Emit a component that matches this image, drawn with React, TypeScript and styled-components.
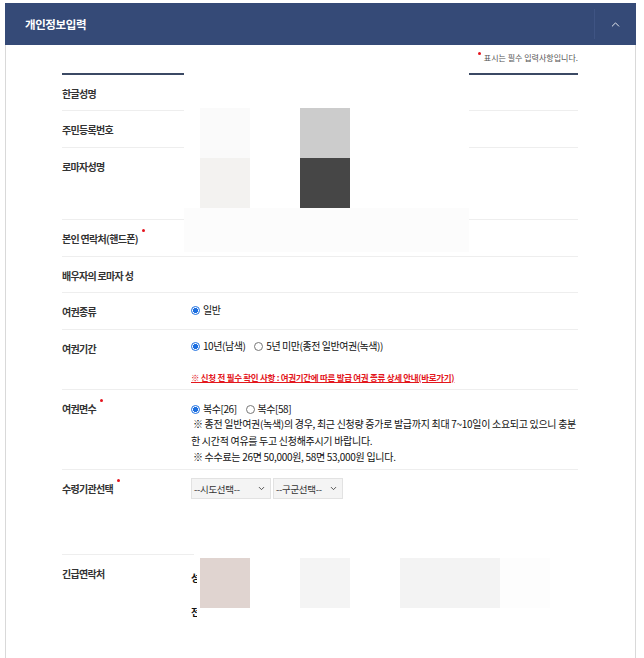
import React from 'react';
import styled, { createGlobalStyle, css } from 'styled-components';
import { ChevronDown, ChevronUp } from 'lucide-react';

const GlobalStyle = createGlobalStyle`
  html, body {
    margin: 0;
    padding: 0;
    background: #ffffff;
  }
  body {
    font-family: "Noto Sans CJK KR", "Noto Sans", sans-serif;
    color: #222;
  }
`;

const Page = styled.div`
  position: relative;
  width: 644px;
  height: 658px;
  padding: 3px 8px 0 5px;
  box-sizing: border-box;
  overflow: hidden;
`;

const Panel = styled.section`
  display: flex;
  flex-direction: column;
  width: 631px;
`;

const PanelHeader = styled.div`
  height: 42px;
  display: flex;
  align-items: center;
  justify-content: space-between;
  background: #354a77;
  padding-left: 20px;
  box-sizing: border-box;
`;

const PanelTitle = styled.h2`
  margin: 0;
  font-size: 11.5px;
  font-weight: 700;
  color: #ffffff;
  letter-spacing: -0.4px;
`;

const HeaderToggle = styled.button`
  width: 42px;
  height: 30px;
  display: flex;
  align-items: center;
  justify-content: center;
  background: none;
  border: none;
  border-left: 1px solid #3f5483;
  margin: 0;
  padding: 0;
  color: #ffffff;
  box-sizing: border-box;

  svg {
    width: 13px;
    height: 13px;
  }
`;

const PanelBody = styled.div`
  border-left: 1px solid #d9d9d9;
  border-right: 1px solid #d9d9d9;
  padding: 7px 57px 0 56px;
  height: 620px;
  box-sizing: border-box;
`;

const RequiredNote = styled.p`
  margin: 0 0 9px;
  text-align: right;
  font-size: 8px;
  line-height: 12px;
  color: #555;
  letter-spacing: 0;
`;

const Dot = styled.span<{ $up?: number }>`
  display: inline-block;
  width: 3px;
  height: 3px;
  border-radius: 50%;
  background: #e5141e;
  vertical-align: top;
  position: relative;
  top: ${(p) => -(p.$up ?? 0)}px;
  margin: 0 3px 0 4px;
`;

const FormTable = styled.div`
  border-top: 2px solid #3b4964;
  display: flex;
  flex-direction: column;
`;

const Row = styled.div<{ $h: number; $last?: boolean }>`
  display: grid;
  grid-template-columns: 129px 1fr;
  height: ${(p) => p.$h}px;
  box-sizing: border-box;
  ${(p) =>
    !p.$last &&
    css`
      border-bottom: 1px solid #eeeeee;
    `}
`;

const Label = styled.div`
  padding-top: 12px;
  font-size: 10px;
  line-height: 13px;
  font-weight: 700;
  color: #333;
  letter-spacing: -0.7px;
  white-space: nowrap;
`;

const Value = styled.div<{ $top: number }>`
  padding-top: ${(p) => p.$top}px;
  font-size: 10px;
  line-height: 14px;
  color: #111;
  letter-spacing: -0.45px;
`;

const RadioGroup = styled.div`
  display: flex;
  align-items: center;
  gap: 9px;
  height: 14px;
`;

const RadioOption = styled.label`
  display: flex;
  align-items: center;
  gap: 3px;
  white-space: nowrap;
`;

const RadioMark = styled.span<{ $checked?: boolean }>`
  display: inline-block;
  width: 9px;
  height: 9px;
  border-radius: 50%;
  box-sizing: border-box;
  ${(p) =>
    p.$checked
      ? css`
          border: 1px solid #1d6fe0;
          background: radial-gradient(circle, #1d6fe0 0 2.6px, #ffffff 2.8px);
        `
      : css`
          border: 1px solid #777;
          background: #fff;
        `}
`;

const GuideLink = styled.a`
  display: block;
  margin-top: 18px;
  font-size: 8.5px;
  line-height: 12px;
  font-weight: 700;
  color: #e3161c;
  text-decoration: underline;
  letter-spacing: -0.3px;
  white-space: nowrap;
`;

const Notice = styled.p`
  margin: 0;
  font-size: 10px;
  line-height: 16.5px;
  letter-spacing: -0.3px;
  color: #111;
  white-space: pre-wrap;
`;

const SelectRow = styled.div`
  display: flex;
  gap: 2px;
`;

const SelectBox = styled.div<{ $w: number }>`
  width: ${(p) => p.$w}px;
  height: 21px;
  box-sizing: border-box;
  display: flex;
  align-items: center;
  justify-content: space-between;
  padding: 0 4px 0 2px;
  background: #f4f4f4;
  border: 1px solid #e2e2e2;
  font-size: 9.5px;
  letter-spacing: -0.3px;
  color: #333;

  svg {
    width: 9px;
    height: 9px;
    color: #333;
  }
`;

const ContactLine = styled.div<{ $gap?: number }>`
  margin-top: ${(p) => p.$gap ?? 0}px;
  font-size: 10px;
  line-height: 14px;
  font-weight: 700;
`;

const MaskLayer = styled.div`
  position: absolute;
  inset: 0;
  pointer-events: none;
`;

const Mask = styled.div<{ $x: number; $y: number; $w: number; $h: number; $c: string }>`
  position: absolute;
  left: ${(p) => p.$x}px;
  top: ${(p) => p.$y}px;
  width: ${(p) => p.$w}px;
  height: ${(p) => p.$h}px;
  background: ${(p) => p.$c};
`;

const masks = [
  { x: 184, y: 60, w: 285, h: 148, c: '#ffffff' },
  { x: 184, y: 208, w: 285, h: 44, c: '#fcfcfc' },
  { x: 200, y: 108, w: 50, h: 50, c: '#fafafa' },
  { x: 300, y: 108, w: 50, h: 50, c: '#cccccc' },
  { x: 200, y: 158, w: 50, h: 50, c: '#f3f2f0' },
  { x: 300, y: 158, w: 50, h: 50, c: '#464646' },
  { x: 197, y: 503, w: 420, h: 155, c: '#ffffff' },
  { x: 194, y: 548, w: 6, h: 8, c: '#ffffff' },
  { x: 200, y: 558, w: 50, h: 50, c: '#e0d4d0' },
  { x: 300, y: 558, w: 50, h: 50, c: '#f4f4f4' },
  { x: 400, y: 558, w: 100, h: 50, c: '#f3f3f3' },
  { x: 500, y: 558, w: 50, h: 50, c: '#fdfdfd' },
];

export default function App() {
  return (
    <>
      <GlobalStyle />
      <Page>
        <Panel>
          <PanelHeader>
            <PanelTitle>개인정보입력</PanelTitle>
            <HeaderToggle aria-label="접기">
              <ChevronUp strokeWidth={1.6} />
            </HeaderToggle>
          </PanelHeader>

          <PanelBody>
            <RequiredNote>
              <Dot $up={0} />
              표시는 필수 입력사항입니다.
            </RequiredNote>

            <FormTable>
              <Row $h={36}>
                <Label>한글성명</Label>
                <Value $top={12} />
              </Row>
              <Row $h={37}>
                <Label>주민등록번호</Label>
                <Value $top={12} />
              </Row>
              <Row $h={72}>
                <Label>로마자성명</Label>
                <Value $top={12} />
              </Row>
              <Row $h={37}>
                <Label>
                  본인 연락처(핸드폰)
                  <Dot $up={3} />
                </Label>
                <Value $top={12} />
              </Row>
              <Row $h={36}>
                <Label>배우자의 로마자 성</Label>
                <Value $top={12} />
              </Row>
              <Row $h={37}>
                <Label>여권종류</Label>
                <Value $top={10}>
                  <RadioGroup>
                    <RadioOption>
                      <RadioMark $checked />
                      일반
                    </RadioOption>
                  </RadioGroup>
                </Value>
              </Row>
              <Row $h={60}>
                <Label>여권기간</Label>
                <Value $top={9}>
                  <RadioGroup>
                    <RadioOption>
                      <RadioMark $checked />
                      10년(남색)
                    </RadioOption>
                    <RadioOption>
                      <RadioMark />
                      5년 미만(종전 일반여권(녹색))
                    </RadioOption>
                  </RadioGroup>
                  <GuideLink>
                    ※ 신청 전 필수 확인 사항 : 여권기간에 따른 발급 여권 종류 상세 안내(바로가기)
                  </GuideLink>
                </Value>
              </Row>
              <Row $h={80}>
                <Label>
                  여권면수
                  <Dot $up={3} />
                </Label>
                <Value $top={12}>
                  <RadioGroup>
                    <RadioOption>
                      <RadioMark $checked />
                      복수[26]
                    </RadioOption>
                    <RadioOption>
                      <RadioMark />
                      복수[58]
                    </RadioOption>
                  </RadioGroup>
                  <Notice>
                    {' ※ 종전 일반여권(녹색)의 경우, 최근 신청량 증가로 발급까지 최대 7~10일이 소요되고 있으니 충분한 시간적 여유를 두고 신청해주시기 바랍니다.'}
                  </Notice>
                  <Notice>{' ※ 수수료는 26면 50,000원, 58면 53,000원 입니다.'}</Notice>
                </Value>
              </Row>
              <Row $h={85}>
                <Label>
                  수령기관선택
                  <Dot $up={3} />
                </Label>
                <Value $top={8}>
                  <SelectRow>
                    <SelectBox $w={80}>
                      --시도선택--
                      <ChevronDown strokeWidth={2.2} />
                    </SelectBox>
                    <SelectBox $w={70}>
                      --구군선택--
                      <ChevronDown strokeWidth={2.2} />
                    </SelectBox>
                  </SelectRow>
                </Value>
              </Row>
              <Row $h={100} $last>
                <Label>긴급연락처</Label>
                <Value $top={16}>
                  <ContactLine>성명</ContactLine>
                  <ContactLine $gap={20}>전화번호</ContactLine>
                </Value>
              </Row>
            </FormTable>
          </PanelBody>
        </Panel>

        <MaskLayer>
          {masks.map((m, i) => (
            <Mask key={i} $x={m.x} $y={m.y} $w={m.w} $h={m.h} $c={m.c} />
          ))}
        </MaskLayer>
      </Page>
    </>
  );
}
